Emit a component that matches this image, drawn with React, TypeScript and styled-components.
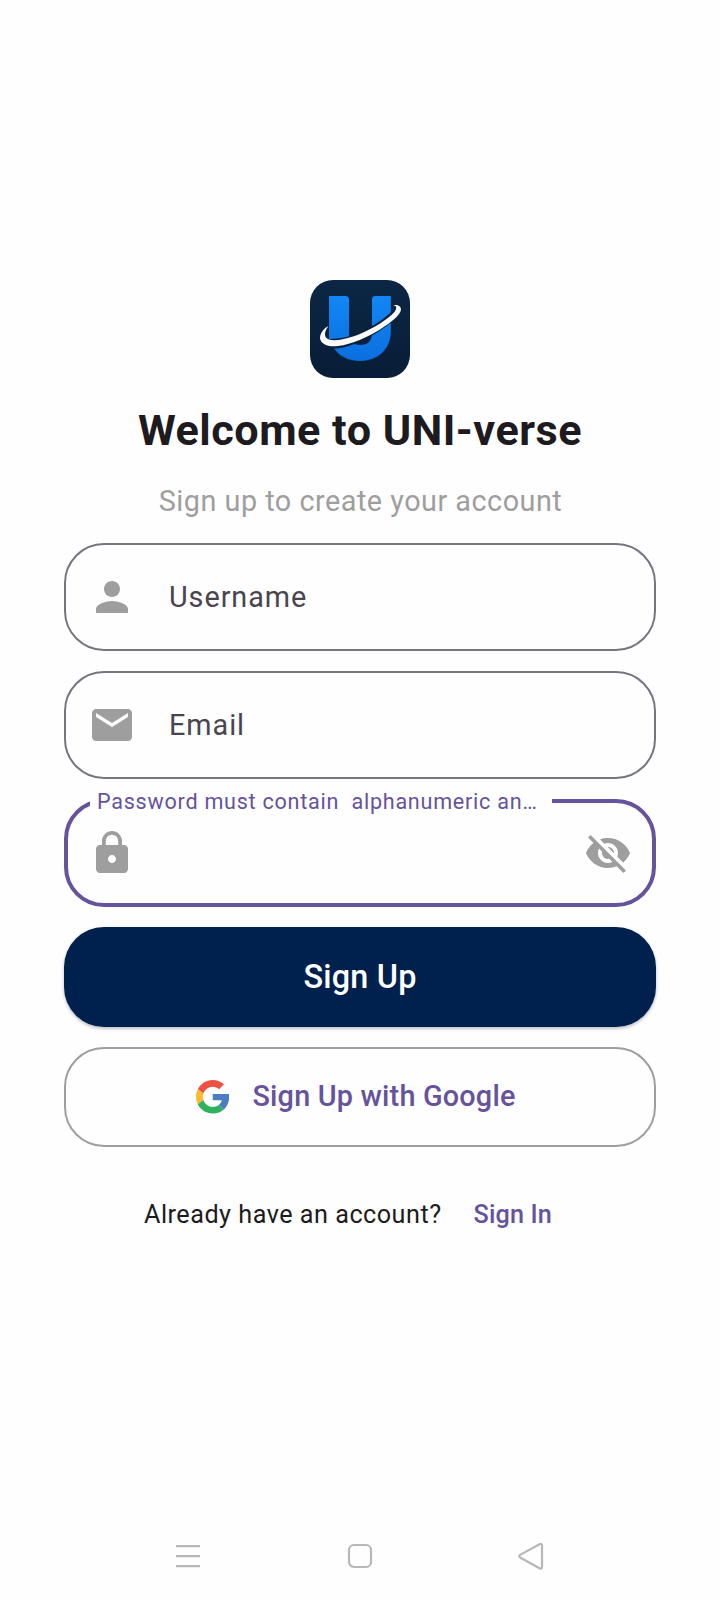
import React, { useState } from 'react';
import styled, { createGlobalStyle } from 'styled-components';

const GlobalStyle = createGlobalStyle`
  *, *::before, *::after { box-sizing: border-box; }
  body {
    margin: 0;
    background: #fefefe;
    font-family: Roboto, sans-serif;
  }
`;

const Screen = styled.div`
  display: flex;
  flex-direction: column;
  width: 720px;
  height: 1600px;
  margin: 0 auto;
  background: #fefefe;
  color: #1d1b20;
`;

const Content = styled.main`
  flex: 1;
  display: flex;
  flex-direction: column;
  align-items: center;
  padding: 280px 64px 0;
`;

const Logo = styled.svg`
  display: block;
  width: 100px;
  height: 98px;
`;

const Title = styled.h1`
  margin: 28px 0 0;
  font-size: 43.2px;
  line-height: 50px;
  font-weight: 700;
  letter-spacing: 0.5px;
  white-space: nowrap;
`;

const Subtitle = styled.p`
  margin: 28px 0 0;
  padding-left: 1px;
  font-size: 28.8px;
  line-height: 34px;
  letter-spacing: 0.5px;
  color: #9e9e9e;
  white-space: nowrap;
`;

const Form = styled.form`
  display: flex;
  flex-direction: column;
  gap: 20px;
  width: 100%;
  margin-top: 25px;
`;

const Field = styled.label<{ $active?: boolean }>`
  position: relative;
  display: flex;
  align-items: center;
  height: 108px;
  padding: 0 ${p => (p.$active ? 20 : 22)}px;
  border: ${p => (p.$active ? '4px solid #65539c' : '2px solid #79747e')};
  border-radius: 40px;
`;

const FieldIcon = styled.svg`
  display: block;
  flex: none;
  width: 48px;
  height: 48px;
  fill: #9e9e9e;
`;

const Input = styled.input`
  flex: 1;
  min-width: 0;
  height: 60px;
  margin-left: 32px;
  padding: 0 0 0 1px;
  border: 0;
  outline: 0;
  background: transparent;
  font: 400 28.8px Roboto, sans-serif;
  letter-spacing: 0.95px;
  color: #1d1b20;
  &::placeholder {
    color: #49454f;
    opacity: 1;
  }
`;

const FloatingLabel = styled.span`
  position: absolute;
  left: 22px;
  top: -17px;
  width: 462px;
  padding-left: 7px;
  background: #fefefe;
  font-size: 21.6px;
  line-height: 32px;
  letter-spacing: 0.74px;
  white-space: pre;
  color: #65539c;
`;

const IconButton = styled.button`
  padding: 0;
  border: 0;
  background: none;
`;

const Button = styled.button<{ $primary?: boolean }>`
  display: flex;
  align-items: center;
  justify-content: center;
  height: 100px;
  padding: 0;
  border-radius: 40px;
  border: ${p => (p.$primary ? '0' : '2px solid #9e9e9e')};
  background: ${p => (p.$primary ? '#00214d' : 'transparent')};
  color: ${p => (p.$primary ? '#ffffff' : '#65539c')};
  box-shadow: ${p => (p.$primary ? '0 2px 3px rgba(0, 15, 50, 0.2), 0 1px 5px rgba(0, 0, 0, 0.07)' : 'none')};
  font: 500 ${p => (p.$primary ? 32.4 : 28.8)}px / 38px Roboto, sans-serif;
  letter-spacing: 0.2px;
`;

const GoogleLogo = styled.svg`
  display: block;
  width: 33.5px;
  height: 33.5px;
  margin: 0 23px 0 -8.5px;
`;

const GoogleText = styled.span`
  padding-bottom: 2px;
`;

const Footer = styled.div`
  display: flex;
  align-self: flex-start;
  align-items: center;
  margin: 53px 0 0 80px;
  font-size: 25.2px;
  line-height: 30px;
  letter-spacing: 0.5px;
  white-space: nowrap;
`;

const SignIn = styled.a`
  margin-left: 32px;
  font-weight: 500;
  letter-spacing: 0.15px;
  color: #65539c;
`;

const NavBar = styled.nav`
  display: grid;
  grid-template-columns: 24px 24px 26px;
  justify-content: start;
  align-items: center;
  column-gap: 148px;
  height: 88px;
  padding-left: 176px;
`;

const NavIcon = styled.svg`
  display: block;
  width: 100%;
  height: 28px;
  overflow: visible;
  fill: none;
  stroke: #b8b8b8;
  stroke-width: 2.2;
  stroke-linejoin: round;
`;

function UniverseLogo() {
  return (
    <Logo viewBox="0 0 100 98">
      <defs>
        <linearGradient id="tile" x1="0" y1="0" x2="0" y2="1">
          <stop offset="0" stopColor="#0b2745" />
          <stop offset="1" stopColor="#071d37" />
        </linearGradient>
        <linearGradient id="letter" gradientUnits="userSpaceOnUse" x1="0" y1="16" x2="0" y2="81">
          <stop offset="0" stopColor="#1187f5" />
          <stop offset="1" stopColor="#0b6fde" />
        </linearGradient>
      </defs>
      <rect width="100" height="98" rx="23" fill="url(#tile)" />
      <path
        fill="url(#letter)"
        d="M19 16H35.500Q39 16 39 19.500V53Q39 65 50 65Q62 65 62 53V19.500Q62 16 65.500 16H80.800V51C80.800 70 67 81 50 81C33 81 19 70 19 51Z"
      />
      <path
        fill="#08203c"
        d="M18.500 57.500C30 60 43 55.500 50 52.500C62 47 76 38 83 30L84 40C75 48 61 57.500 46 63.500C37 67 29 69 22.500 68.500L17 62Z"
      />
      <path fill="url(#letter)" d="M19 50H39V55.500Q29 59.500 19 59Z" />
      <path
        fill="#fafafa"
        d="M18.500 46C14 48 10 53.500 10 58C10.500 64 18 67.500 28 66C42 64.500 58 57 70 49.500C81 42.500 90.500 35 91 29.500C91 25.500 86.500 24 82.500 25.500C87 25 87.500 28.500 84 32.500C78 39 64 48 51 53.500C39 58.500 26 61.500 19 59.500C13.500 57.500 14 52 18.500 46Z"
      />
    </Logo>
  );
}

export default function App() {
  const [hidden, setHidden] = useState(true);
  return (
    <Screen>
      <GlobalStyle />
      <Content>
        <UniverseLogo />
        <Title>Welcome to UNI-verse</Title>
        <Subtitle>Sign up to create your account</Subtitle>
        <Form onSubmit={e => e.preventDefault()}>
          <Field>
            <FieldIcon viewBox="0 0 24 24">
              <path d="M12 12c2.210 0 4-1.790 4-4s-1.790-4-4-4-4 1.790-4 4 1.790 4 4 4zm0 2c-2.670 0-8 1.340-8 4v2h16v-2c0-2.660-5.330-4-8-4z" />
            </FieldIcon>
            <Input placeholder="Username" />
          </Field>
          <Field>
            <FieldIcon viewBox="0 0 24 24">
              <path d="M20 4H4c-1.100 0-1.990.9-1.990 2L2 18c0 1.100.9 2 2 2h16c1.100 0 2-.9 2-2V6c0-1.100-.9-2-2-2zm0 4l-8 5-8-5V6l8 5 8-5v2z" />
            </FieldIcon>
            <Input placeholder="Email" />
          </Field>
          <Field $active>
            <FloatingLabel>{'Password must contain  alphanumeric an…'}</FloatingLabel>
            <FieldIcon viewBox="0 0 24 24">
              <path d="M18 8h-1V6c0-2.760-2.240-5-5-5S7 3.240 7 6v2H6c-1.100 0-2 .9-2 2v10c0 1.100.9 2 2 2h12c1.100 0 2-.9 2-2V10c0-1.100-.9-2-2-2zm-6 9c-1.100 0-2-.9-2-2s.9-2 2-2 2 .9 2 2-.9 2-2 2zm3.100-9H8.900V6c0-1.710 1.390-3.100 3.100-3.100 1.710 0 3.100 1.390 3.100 3.100v2z" />
            </FieldIcon>
            <Input type={hidden ? 'password' : 'text'} />
            <IconButton type="button" onClick={() => setHidden(!hidden)}>
              <FieldIcon viewBox="0 0 24 24">
                <path d="M12 7c2.760 0 5 2.240 5 5 0 .65-.13 1.260-.36 1.830l2.920 2.920c1.510-1.260 2.700-2.890 3.430-4.750-1.730-4.390-6-7.500-11-7.500-1.400 0-2.740.25-3.980.7l2.160 2.160C10.740 7.130 11.350 7 12 7zM2 4.270l2.280 2.280.46.46C3.080 8.300 1.780 10.020 1 12c1.730 4.390 6 7.500 11 7.500 1.550 0 3.030-.3 4.380-.84l.42.42L19.730 22 21 20.730 3.270 3 2 4.270zM7.530 9.800l1.550 1.550c-.05.21-.08.43-.08.65 0 1.660 1.340 3 3 3 .22 0 .44-.03.65-.08l1.550 1.550c-.67.33-1.410.53-2.200.53-2.760 0-5-2.240-5-5 0-.79.2-1.530.53-2.200zm4.310-.78l3.150 3.150.02-.16c0-1.660-1.340-3-3-3l-.17.01z" />
              </FieldIcon>
            </IconButton>
          </Field>
          <Button $primary>Sign Up</Button>
          <Button type="button">
            <GoogleLogo viewBox="0 0 48 48">
              <path fill="#eb5244" d="M24 9.500c3.540 0 6.710 1.220 9.210 3.600l6.850-6.850C35.900 2.380 30.470 0 24 0 14.620 0 6.510 5.380 2.560 13.220l7.980 6.190C12.430 13.720 17.740 9.500 24 9.500z" />
              <path fill="#4a7dc4" d="M47.500 24.550c0-1.570-.15-3.090-.38-4.550H24v9.020h12.940c-.58 2.960-2.260 5.480-4.780 7.180l7.730 6c4.510-4.180 7.610-10.360 7.610-17.650z" />
              <path fill="#fabb2e" d="M10.530 28.590c-.48-1.450-.76-2.990-.76-4.590s.27-3.140.76-4.590l-7.980-6.190C.92 16.460 0 20.120 0 24c0 3.880.92 7.540 2.560 10.780l7.970-6.190z" />
              <path fill="#2fb15e" d="M24 48c6.480 0 11.930-2.130 15.890-5.810l-7.730-6c-2.150 1.450-4.920 2.300-8.160 2.300-6.260 0-11.570-4.220-13.470-9.910l-7.980 6.190C6.510 42.620 14.620 48 24 48z" />
            </GoogleLogo>
            <GoogleText>Sign Up with Google</GoogleText>
          </Button>
        </Form>
        <Footer>
          Already have an account?
          <SignIn>Sign In</SignIn>
        </Footer>
      </Content>
      <NavBar>
        <NavIcon viewBox="0 0 24 28">
          <path d="M0 4.200h24M0 14.200h24M0 24.200h24" />
        </NavIcon>
        <NavIcon viewBox="0 0 24 28">
          <rect x="1" y="3" width="22" height="22" rx="5" />
        </NavIcon>
        <NavIcon viewBox="0 0 26 28">
          <path d="M19.500 2.300L0.500 12.600Q-2 14.200 0.500 15.800L19.500 26.200Q22 27.500 22 24.800V3.700Q22 1 19.500 2.300Z" />
        </NavIcon>
      </NavBar>
    </Screen>
  );
}
